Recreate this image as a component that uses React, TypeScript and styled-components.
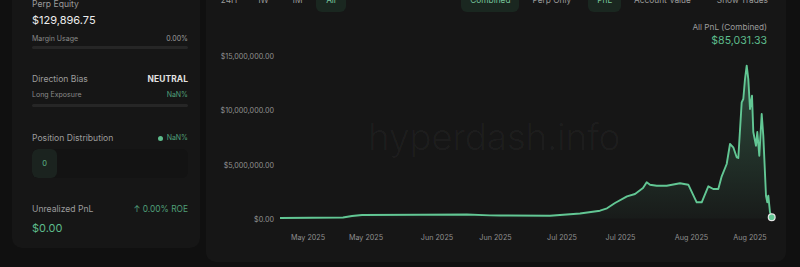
import { FC } from 'react';
import styled, { createGlobalStyle } from 'styled-components';

const colors = {
    page: '#101010',
    card: '#161616',
    label: '#9c9c9c',
    muted: '#8a8a8a',
    text: '#ededed',
    green: '#5dbb8b',
    greenDim: '#4f9f78',
    line: '#62c794',
    track: '#262626',
    pill: '#1a2720',
};

const GlobalStyle = createGlobalStyle`
    body {
        margin: 0;
        background: ${colors.page};
        font-family: Inter, 'Liberation Sans', sans-serif;
        overflow: hidden;
    }
`;

const Page = styled.div`
    display: flex;
    align-items: flex-start;
    gap: 6px;
    margin-top: -22px;
    padding: 0 14px 0 12px;
`;

const SideCard = styled.aside`
    box-sizing: border-box;
    width: 188px;
    padding: 20px 12px 13px 20px;
    background: ${colors.card};
    border-radius: 10px;
    display: flex;
    flex-direction: column;
`;

const Label = styled.div<{ $mt?: number }>`
    margin-top: ${(p) => p.$mt ?? 0}px;
    font-size: 8.6px;
    line-height: 12px;
    color: ${colors.label};
`;

const Row = styled.div<{ $mt?: number }>`
    display: flex;
    align-items: center;
    justify-content: space-between;
    margin-top: ${(p) => p.$mt ?? 0}px;
`;

const SmallLabel = styled.span`
    font-size: 7px;
    line-height: 10px;
    color: ${colors.muted};
`;

const SmallValue = styled.span<{ $green?: boolean }>`
    font-size: 7px;
    line-height: 10px;
    color: ${(p) => (p.$green ? colors.greenDim : colors.label)};
`;

const BigValue = styled.div<{ $green?: boolean; $mt?: number }>`
    margin-top: ${(p) => p.$mt ?? 0}px;
    font-size: 11px;
    line-height: 14px;
    color: ${(p) => (p.$green ? colors.green : colors.text)};
`;

const Bias = styled.span`
    font-size: 8.4px;
    line-height: 12px;
    font-weight: 700;
    color: #e2e2e2;
    letter-spacing: 0.1px;
`;

const Track = styled.div<{ $mt?: number }>`
    margin-top: ${(p) => p.$mt ?? 0}px;
    height: 3px;
    border-radius: 2px;
    background: ${colors.track};
`;

const Dot = styled.span`
    display: inline-block;
    width: 5px;
    height: 5px;
    border-radius: 50%;
    background: ${colors.green};
    margin-right: 4px;
`;

const GreenTag = styled.span`
    display: flex;
    align-items: center;
    font-size: 7px;
    line-height: 10px;
    color: ${colors.greenDim};
`;

const Roe = styled.span`
    font-size: 8.4px;
    line-height: 12px;
    color: ${colors.greenDim};
`;

const DistBar = styled.div`
    display: flex;
    margin-top: 5px;
    height: 29px;
    border-radius: 6px;
    background: #131313;
    overflow: hidden;
`;

const DistSegment = styled.div`
    width: 25px;
    display: flex;
    align-items: center;
    justify-content: center;
    border-radius: 6px;
    background: #1b231f;
    font-size: 7.5px;
    color: ${colors.green};
`;

const ChartCard = styled.section`
    box-sizing: border-box;
    flex: 1;
    height: 284px;
    padding: 10px 9px 0 8px;
    background: ${colors.card};
    border-radius: 10px;
    display: flex;
    flex-direction: column;
    position: relative;
`;

const Toolbar = styled.div`
    display: flex;
    justify-content: space-between;
    align-items: center;
`;

const Group = styled.div`
    display: flex;
    gap: 8px;
`;

const Segment = styled.div`
    display: flex;
    gap: 4px;
`;

const ToolButton = styled.button<{ $active?: boolean; $fixed?: boolean }>`
    box-sizing: border-box;
    height: 24px;
    min-width: ${(p) => (p.$fixed ? '30px' : '0')};
    padding: 0 ${(p) => (p.$fixed ? '0' : '9px')};
    border: none;
    border-radius: 6px;
    background: ${(p) => (p.$active ? colors.pill : 'transparent')};
    color: ${(p) => (p.$active ? '#76c49b' : colors.label)};
    font-family: inherit;
    font-size: 8.3px;
`;

const Stat = styled.div`
    align-self: flex-end;
    margin-top: 10px;
    margin-right: 10px;
    text-align: right;
`;

const StatLabel = styled.div`
    font-size: 8.2px;
    line-height: 10px;
    color: ${colors.label};
`;

const StatValue = styled.div`
    margin-top: 3px;
    font-size: 10.6px;
    line-height: 12px;
    color: ${colors.green};
`;

const Watermark = styled.span`
    position: absolute;
    left: 162px;
    top: 136px;
    font-size: 37px;
    font-weight: 300;
    letter-spacing: -0.3px;
    color: rgba(255, 255, 255, 0.035);
    pointer-events: none;
`;

const Plot = styled.svg`
    display: block;
    overflow: visible;
    margin-left: 7px;
`;

const pts: [number, number][] = [
    [280, 219], [343, 218.5], [352, 217], [362, 216], [420, 215.7], [467, 215.5],
    [490, 216.4], [500, 216.5], [550, 216.7], [580, 214.5], [600, 211.7], [607, 209.3],
    [615, 204], [627, 197.3], [635, 195], [643, 189], [646.7, 183.3], [650, 185.7],
    [656.7, 186.7], [666.7, 186.7], [680, 184.3], [688.3, 185.7], [696.7, 203.3],
    [701.7, 203.3], [708.3, 187.3], [713.3, 190], [718.3, 190], [721.7, 177.3],
    [726.7, 165], [730, 145], [733.3, 148.3], [736.7, 158.3], [738.3, 159],
    [741.7, 103.3], [743.3, 100], [745, 80], [746.7, 66.7], [748.3, 80], [750, 110],
    [752, 96.7], [753.3, 133], [756, 146.7], [757.3, 133], [759.3, 156.7], [761.7, 115],
    [763.3, 136.7], [766, 196.7], [767.3, 203.3], [768.3, 196.7], [770, 213.3], [771.7, 218.3],
];

const linePath = pts.map(([x, y], i) => `${i ? 'L' : 'M'}${x} ${y}`).join(' ');
const areaPath = `${linePath} L771.7 219.5 L280 219.5 Z`;

const yTicks = [
    { v: '$15,000,000.00', y: 57 },
    { v: '$10,000,000.00', y: 111.5 },
    { v: '$5,000,000.00', y: 166 },
    { v: '$0.00', y: 220 },
];

const xTicks = [
    ['May 2025', 308], ['May 2025', 366], ['Jun 2025', 437], ['Jun 2025', 495.5],
    ['Jul 2025', 562], ['Jul 2025', 620.5], ['Aug 2025', 691.5], ['Aug 2025', 750],
] as const;

const Chart: FC = () => (
    <Plot width={548} height={200} viewBox="221 48 548 200">
        <defs>
            <linearGradient id="pnlFill" x1="0" y1="0" x2="0" y2="1">
                <stop offset="0%" stopColor={colors.line} stopOpacity={0.32} />
                <stop offset="100%" stopColor={colors.line} stopOpacity={0.03} />
            </linearGradient>
        </defs>
        {yTicks.map((t) => (
            <text key={t.v} x={274} y={t.y + 2.5} textAnchor="end" fontSize={7.2} fill="#909090" fontFamily="Inter, 'Liberation Sans', sans-serif">
                {t.v}
            </text>
        ))}
        {xTicks.map(([label, x], i) => (
            <text key={i} x={x} y={240.5} textAnchor="middle" fontSize={7.2} fill="#909090" fontFamily="Inter, 'Liberation Sans', sans-serif">
                {label}
            </text>
        ))}
        <path d={areaPath} fill="url(#pnlFill)" />
        <path d={linePath} fill="none" stroke={colors.line} strokeWidth={1.9} strokeLinejoin="round" />
        <circle cx={771.7} cy={218.3} r={3.4} fill={colors.line} stroke="#e6e6e6" strokeWidth={1.2} />
    </Plot>
);

const App: FC = () => (
    <>
        <GlobalStyle />
        <Page>
            <SideCard>
                <Label>Perp Equity</Label>
                <BigValue $mt={3}>$129,896.75</BigValue>
                <Row $mt={7}>
                    <SmallLabel>Margin Usage</SmallLabel>
                    <SmallValue>0.00%</SmallValue>
                </Row>
                <Track $mt={2} />

                <Row $mt={24}>
                    <Label>Direction Bias</Label>
                    <Bias>NEUTRAL</Bias>
                </Row>
                <Row $mt={5}>
                    <SmallLabel>Long Exposure</SmallLabel>
                    <SmallValue $green>NaN%</SmallValue>
                </Row>
                <Track $mt={4} />

                <Row $mt={25}>
                    <Label>Position Distribution</Label>
                    <GreenTag>
                        <Dot />
                        NaN%
                    </GreenTag>
                </Row>
                <DistBar>
                    <DistSegment>0</DistSegment>
                </DistBar>

                <Row $mt={25}>
                    <Label>Unrealized PnL</Label>
                    <Roe>↑ 0.00% ROE</Roe>
                </Row>
                <BigValue $green $mt={6}>
                    $0.00
                </BigValue>
            </SideCard>

            <ChartCard>
                <Toolbar>
                    <Segment>
                        <ToolButton $fixed>24H</ToolButton>
                        <ToolButton $fixed>1W</ToolButton>
                        <ToolButton $fixed>1M</ToolButton>
                        <ToolButton $fixed $active>
                            All
                        </ToolButton>
                    </Segment>
                    <Group>
                        <Segment>
                            <ToolButton $active>Combined</ToolButton>
                            <ToolButton>Perp Only</ToolButton>
                        </Segment>
                        <Segment>
                            <ToolButton $active>PnL</ToolButton>
                            <ToolButton>Account Value</ToolButton>
                        </Segment>
                        <ToolButton>Show Trades</ToolButton>
                    </Group>
                </Toolbar>
                <Stat>
                    <StatLabel>All PnL (Combined)</StatLabel>
                    <StatValue>$85,031.33</StatValue>
                </Stat>
                <Watermark>hyperdash.info</Watermark>
                <Chart />
            </ChartCard>
        </Page>
    </>
);

export default App;
